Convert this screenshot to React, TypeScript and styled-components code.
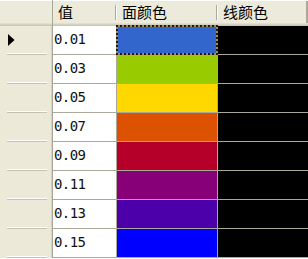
import { Fragment } from 'react';
import styled, { createGlobalStyle } from 'styled-components';

const GlobalStyle = createGlobalStyle`
	html, body {
		margin: 0;
		padding: 0;
		background: #ffffff;
		overflow: hidden;
	}
`;

const Grid = styled.div`
	display: grid;
	grid-template-columns: 53px 64px 101px 1fr;
	grid-auto-rows: 29px;
	grid-template-rows: 26px;
	width: 308px;
	font-family: 'DejaVu Sans Mono', monospace;
`;

const Corner = styled.div`
	background: #ebeadb;
	border-right: 1px solid #aca899;
	box-shadow: inset 0 1px 0 #ffffff, inset 0 -1px 0 #cbc7b8, inset 0 -2px 0 #d6d2c2,
		inset 0 -3px 0 #e2decd;
`;

const HeaderCell = styled.div<{ $last?: boolean }>`
	display: flex;
	align-items: center;
	padding: 0 0 3px 5px;
	background-color: #ebeadb;
	background-image: ${(p) =>
		p.$last
			? 'none'
			: 'linear-gradient(#aca899, #aca899), linear-gradient(#ffffff, #ffffff)'};
	background-repeat: no-repeat;
	background-size: 1px 15px;
	background-position: right 1px top 5px, right 0 top 5px;
	box-shadow: inset 0 1px 0 #ffffff, inset 0 -1px 0 #cbc7b8, inset 0 -2px 0 #d6d2c2,
		inset 0 -3px 0 #e2decd ${(p) => (p.$last ? ', inset -2px 0 0 #aca899' : '')};
	font-family: 'Noto Sans CJK SC', sans-serif;
	font-size: 15px;
	color: #000000;
	line-height: 1;
`;

const RowHeader = styled.div`
	display: flex;
	align-items: center;
	padding: 0 0 2px 8px;
	background-color: #ece9d8;
	background-image: linear-gradient(#ffffff, #ffffff), linear-gradient(#c5c2b2, #c5c2b2);
	background-repeat: no-repeat;
	background-size: 40px 1px;
	background-position: left 7px bottom 1px, left 7px bottom 0;
	border-right: 1px solid #aca899;
	box-shadow: inset -1px 0 0 #d6d2c2;
`;

const ValueCell = styled.div`
	display: flex;
	align-items: center;
	padding: 0 0 2px 1px;
	background: #ffffff;
	border-right: 1px solid #aca899;
	border-bottom: 1px solid #aca899;
	font-size: 14px;
	letter-spacing: -0.6px;
	color: #111111;
`;

const ColorCell = styled.div<{ $color: string; $focused?: boolean }>`
	position: relative;
	background: ${(p) => p.$color};
	border-right: 1px solid #aca899;
	border-bottom: 1px solid #aca899;

	${(p) =>
		p.$focused &&
		`
		&::before, &::after {
			content: '';
			position: absolute;
			top: -1px;
			left: -1px;
			right: -1px;
			bottom: -1px;
		}
		&::before {
			border: 2px solid #a08c5e;
		}
		&::after {
			border: 2px dotted #201a0e;
		}
	`}
`;

const LineCell = styled.div`
	background: #000000;
	border-bottom: 1px solid #aca899;
`;

const rows = [
	{ value: '0.01', color: '#3366cc' },
	{ value: '0.03', color: '#99cc00' },
	{ value: '0.05', color: '#ffd800' },
	{ value: '0.07', color: '#dd5200' },
	{ value: '0.09', color: '#b5002a' },
	{ value: '0.11', color: '#880077' },
	{ value: '0.13', color: '#4c00aa' },
	{ value: '0.15', color: '#0000ff' },
];

function Arrow() {
	return (
		<svg width='7' height='12' viewBox='0 0 7 12'>
			<polygon points='0,0 6.5,6 0,12' fill='#000000' />
		</svg>
	);
}

export default function App() {
	return (
		<>
			<GlobalStyle />
			<Grid>
				<Corner />
				<HeaderCell>值</HeaderCell>
				<HeaderCell>面颜色</HeaderCell>
				<HeaderCell $last>线颜色</HeaderCell>
				{rows.map((row, i) => (
					<Fragment key={row.value}>
						<RowHeader>{i === 0 && <Arrow />}</RowHeader>
						<ValueCell>{row.value}</ValueCell>
						<ColorCell $color={row.color} $focused={i === 0} />
						<LineCell />
					</Fragment>
				))}
			</Grid>
		</>
	);
}
